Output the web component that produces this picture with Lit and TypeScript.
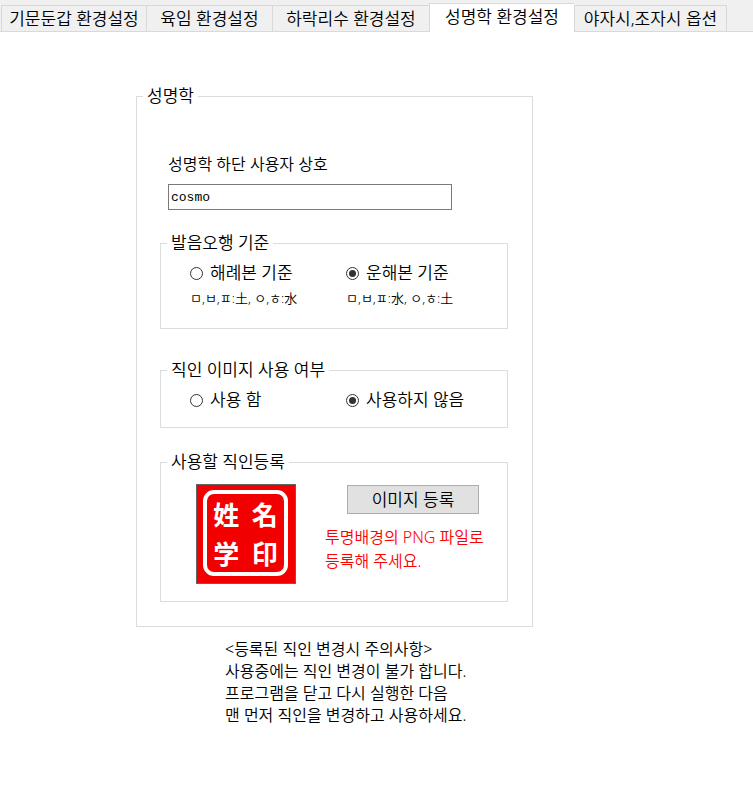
import { LitElement, html, css } from "lit";
import { customElement, property, state } from "lit/decorators.js";

interface Choice {
  value: string;
  label: string;
  hint?: string;
}

@customElement("settings-tabs")
class SettingsTabs extends LitElement {
  @property({ type: Array }) tabs: string[] = [];
  @property({ type: Number }) active = 0;

  static styles = css`
    :host {
      display: block;
      background: #f0f0f0;
    }
    .bar {
      display: grid;
      grid-template-columns: 145px 126px 157px 145px 153px 1fr;
      align-items: end;
      height: 32px;
      padding-left: 1px;
      box-sizing: border-box;
      box-shadow: inset 0 -1px #d9d9d9;
    }
    .tab {
      height: 27px;
      box-sizing: border-box;
      margin: 0;
      padding: 0;
      border: 1px solid #d9d9d9;
      border-right-width: 0;
      background: #f0f0f0;
      font: inherit;
      line-height: 24px;
      color: #000;
      white-space: nowrap;
    }
    .tab:last-of-type {
      border-right-width: 1px;
    }
    .tab.active {
      height: 29px;
      padding-bottom: 3px;
      border-bottom-width: 0;
      background: #fff;
    }
  `;

  render() {
    return html`<div class="bar" role="tablist">
      ${this.tabs.map(
        (t, i) => html`<button
          class="tab ${i === this.active ? "active" : ""}"
          role="tab"
          aria-selected=${i === this.active ? "true" : "false"}
          @click=${() => this.dispatchEvent(new CustomEvent("pick", { detail: i }))}
        >${t}</button>`
      )}
    </div>`;
  }
}

@customElement("choice-group")
class ChoiceGroup extends LitElement {
  @property() name = "";
  @property() value = "";
  @property({ type: Array }) choices: Choice[] = [];

  static styles = css`
    :host {
      display: block;
    }
    .choices {
      display: grid;
      grid-template-columns: 156px 1fr;
    }
    .option {
      display: flex;
      align-items: center;
      gap: 7px;
      line-height: 24px;
      white-space: nowrap;
    }
    .radio {
      appearance: none;
      display: grid;
      place-content: center;
      width: 13px;
      height: 13px;
      margin: 0;
      border: 1px solid #333;
      border-radius: 50%;
      background: #fff;
    }
    .radio:checked::before {
      content: "";
      width: 7px;
      height: 7px;
      border-radius: 50%;
      background: #333;
    }
    .hint {
      margin: 4px 0 0;
      font-size: 13px;
      line-height: 18px;
      white-space: nowrap;
    }
  `;

  render() {
    return html`<div class="choices">
      ${this.choices.map(
        (c) => html`<div>
          <label class="option">
            <input
              class="radio"
              type="radio"
              name=${this.name}
              .checked=${c.value === this.value}
              @change=${() => (this.value = c.value)}
            />${c.label}
          </label>
          ${c.hint ? html`<p class="hint">${c.hint}</p>` : ""}
        </div>`
      )}
    </div>`;
  }
}

@customElement("app-root")
export class AppRoot extends LitElement {
  @state() private active = 3;

  static styles = css`
    :host {
      display: block;
      min-height: 100vh;
      background: #fff;
      color: #000;
      font-family: "Noto Sans", "Noto Sans CJK KR", sans-serif;
      font-size: 17px;
      font-weight: 350;
    }
    .page {
      padding: 52px 0 0 136px;
    }
    fieldset {
      box-sizing: border-box;
      min-width: 0;
      margin: 0;
      border: 1px solid #dcdcdc;
    }
    legend {
      padding: 0 4px;
      line-height: 24px;
    }
    .panel {
      max-width: 397px;
      padding: 44px 24px 24px 23px;
    }
    .panel > legend {
      margin-left: -17px;
    }
    .field {
      display: flex;
      flex-direction: column;
      gap: 8px;
      margin: 0 56px 21px 8px;
      font-size: 16px;
      line-height: 24px;
    }
    .text {
      box-sizing: border-box;
      width: 100%;
      height: 26px;
      margin: 0;
      padding: 0 2px;
      border: 1px solid #7a7a7a;
      border-radius: 0;
      background: #fff;
      color: #000;
      font: 13px "Liberation Mono", monospace;
    }
    .group {
      padding: 6px 0 15px 29px;
    }
    .group > legend {
      margin-left: -23px;
    }
    .sound {
      margin-bottom: 29px;
      padding-bottom: 21px;
    }
    .use {
      margin-bottom: 22px;
    }
    .upload {
      display: flex;
      gap: 29px;
      padding: 10px 0 17px 35px;
    }
    .upload > legend {
      margin-left: -29px;
    }
    .seal {
      box-sizing: border-box;
      flex: none;
      width: 100px;
      height: 100px;
      padding: 5px 7px 7px 6px;
      border: 1px solid #646464;
      background: #f20000;
    }
    .stamp {
      display: grid;
      grid-template-columns: 1fr 1fr;
      place-items: center;
      box-sizing: border-box;
      height: 100%;
      border: 4px solid #fff;
      border-radius: 11px;
      color: #fff;
      font: 700 26px/39px "Noto Sans CJK JP", sans-serif;
    }
    .action {
      display: block;
      width: 132px;
      height: 29px;
      margin: 1px 0 11px 22px;
      padding: 0;
      border: 1px solid #adadad;
      background: #e1e1e1;
      color: #000;
      font: inherit;
      line-height: 26px;
    }
    .warning {
      margin: 0;
      color: #f00;
      font-size: 16px;
      line-height: 24px;
      white-space: nowrap;
    }
    .note {
      margin: 11px 0 0 89px;
      font-size: 16px;
      line-height: 22px;
    }
  `;

  render() {
    return html`
      <settings-tabs
        .tabs=${["기문둔갑 환경설정", "육임 환경설정", "하락리수 환경설정", "성명학 환경설정", "야자시,조자시 옵션"]}
        .active=${this.active}
        @pick=${(e: CustomEvent<number>) => (this.active = e.detail)}
      ></settings-tabs>
      <main class="page">
        <fieldset class="panel">
          <legend>성명학</legend>
          <div class="field">
            <label for="company">성명학 하단 사용자 상호</label>
            <input class="text" id="company" type="text" value="cosmo" />
          </div>
          <fieldset class="group sound">
            <legend>발음오행 기준</legend>
            <choice-group
              name="sound"
              value="unhae"
              .choices=${[
                { value: "haerye", label: "해례본 기준", hint: "ㅁ,ㅂ,ㅍ:土, ㅇ,ㅎ:水" },
                { value: "unhae", label: "운해본 기준", hint: "ㅁ,ㅂ,ㅍ:水, ㅇ,ㅎ:土" },
              ]}
            ></choice-group>
          </fieldset>
          <fieldset class="group use">
            <legend>직인 이미지 사용 여부</legend>
            <choice-group
              name="use"
              value="no"
              .choices=${[
                { value: "yes", label: "사용 함" },
                { value: "no", label: "사용하지 않음" },
              ]}
            ></choice-group>
          </fieldset>
          <fieldset class="upload">
            <legend>사용할 직인등록</legend>
            <div class="seal">
              <div class="stamp"><span>姓</span><span>名</span><span>学</span><span>印</span></div>
            </div>
            <div>
              <button class="action" type="button">이미지 등록</button>
              <p class="warning">투명배경의 PNG 파일로<br />등록해 주세요.</p>
            </div>
          </fieldset>
        </fieldset>
        <p class="note">
          &lt;등록된 직인 변경시 주의사항&gt;<br />
          사용중에는 직인 변경이 불가 합니다.<br />
          프로그램을 닫고 다시 실행한 다음<br />
          맨 먼저 직인을 변경하고 사용하세요.
        </p>
      </main>
    `;
  }
}
